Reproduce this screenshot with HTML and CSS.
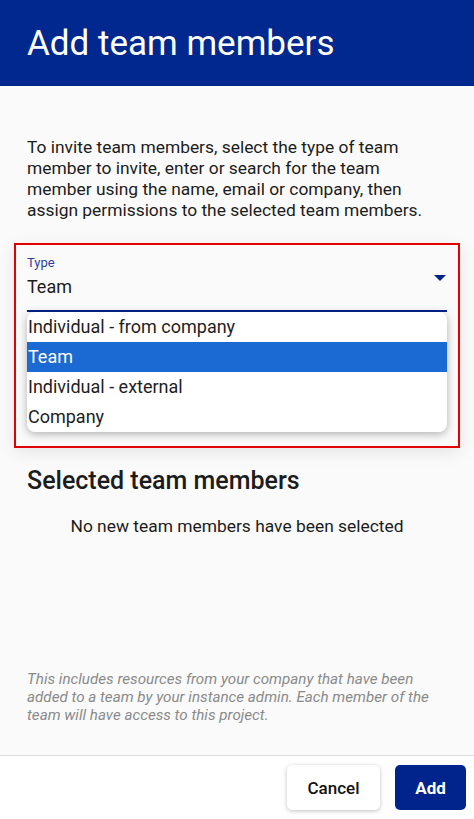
FILE: index.html
```html
<!DOCTYPE html>
<html lang="en">
<head>
    <meta charset="UTF-8">
    <title>Add team members</title>
    <link rel="stylesheet" href="styles.css">
</head>
<body>
    <div class="header">
        <h1>Add team members</h1>
    </div>

    <div class="content">
        <p class="intro">To invite team members, select the type of team member to invite, enter or search for the team member using the name, email or company, then assign permissions to the selected team members.</p>

        <div class="highlight">
            <div class="field">
                <span class="label">Type</span>
                <span class="value">Team</span>
                <svg class="arrow" width="12" height="6" viewBox="0 0 12 6"><path d="M0 0h12L6 6z" fill="#00238c"/></svg>
                <ul class="options">
                    <li>Individual - from company</li>
                    <li class="selected">Team</li>
                    <li>Individual - external</li>
                    <li>Company</li>
                </ul>
            </div>
            <div class="search"></div>
        </div>

        <h2>Selected team members</h2>
        <p class="empty">No new team members have been selected</p>

        <p class="note">This includes resources from your company that have been added to a team by your instance admin. Each member of the team will have access to this project.</p>
    </div>

    <div class="footer">
        <button class="cancel">Cancel</button>
        <button class="add">Add</button>
    </div>
</body>
</html>
```

FILE: styles.css
```css
body {
    font-family: Roboto, "Liberation Sans", sans-serif;
    background-color: #fafafa;
    margin: 0;
    height: 100vh;
    display: flex;
    flex-direction: column;
    color: #1c1c1c;
}
.header {
    background-color: #00288f;
    height: 86px;
    display: flex;
    align-items: center;
    padding: 0 27px;
    flex-shrink: 0;
}
h1 {
    color: white;
    font-size: 35px;
    font-weight: 400;
    margin: 0;
}
.content {
    flex: 1;
    display: flex;
    flex-direction: column;
    padding: 0 27px;
}
.intro {
    font-size: 17.4px;
    line-height: 21px;
    margin: 51px 0 0;
}
.highlight {
    margin: 22px -13px 0;
    height: 201px;
    border: 2px solid #e30000;
    padding: 0 11px;
    box-shadow: 0 4px 16px rgba(0,0,0,0.09);
}
.field {
    position: relative;
    height: 65px;
    border-bottom: 2px solid #00238c;
    display: flex;
    flex-direction: column;
}
.label {
    font-size: 13px;
    color: #2a3f9a;
    margin-top: 10px;
}
.value {
    font-size: 18px;
    margin-top: 6px;
}
.arrow {
    position: absolute;
    right: 1px;
    top: 30px;
}
.options {
    position: absolute;
    top: 67px;
    left: 0;
    right: 0;
    margin: 0;
    padding: 0;
    list-style: none;
    background-color: white;
    border-radius: 8px;
    box-shadow: 0 2px 8px rgba(0,0,0,0.3);
    overflow: hidden;
    z-index: 2;
}
.options li {
    height: 30px;
    line-height: 30px;
    font-size: 18px;
    padding-left: 1px;
    color: #1e1e1e;
}
.options li.selected {
    background-color: #1b69d3;
    color: white;
}
.search {
    height: 52px;
    margin-top: 52px;
    border: 1px solid #999;
    border-radius: 4px;
}
h2 {
    font-size: 25px;
    font-weight: 500;
    margin: 18px 0 0;
}
.empty {
    text-align: center;
    font-size: 17.4px;
    margin: 21px 0 0;
}
.note {
    margin: auto 0 31px;
    font-size: 15.2px;
    line-height: 18px;
    font-style: italic;
    color: #8a8a8a;
}
.footer {
    background-color: white;
    border-top: 1px solid #dddddd;
    height: 63px;
    flex-shrink: 0;
    display: flex;
    justify-content: flex-end;
    align-items: center;
    gap: 15px;
    padding-right: 8px;
}
button {
    height: 45px;
    border: none;
    border-radius: 5px;
    font-family: Roboto, "Liberation Sans", sans-serif;
    font-size: 17px;
    cursor: pointer;
}
.cancel {
    width: 93px;
    background-color: white;
    color: #111;
    font-weight: 500;
    box-shadow: 0 1px 4px rgba(0,0,0,0.25);
}
.add {
    width: 71px;
    background-color: #00238c;
    color: white;
    font-weight: 700;
}
```
